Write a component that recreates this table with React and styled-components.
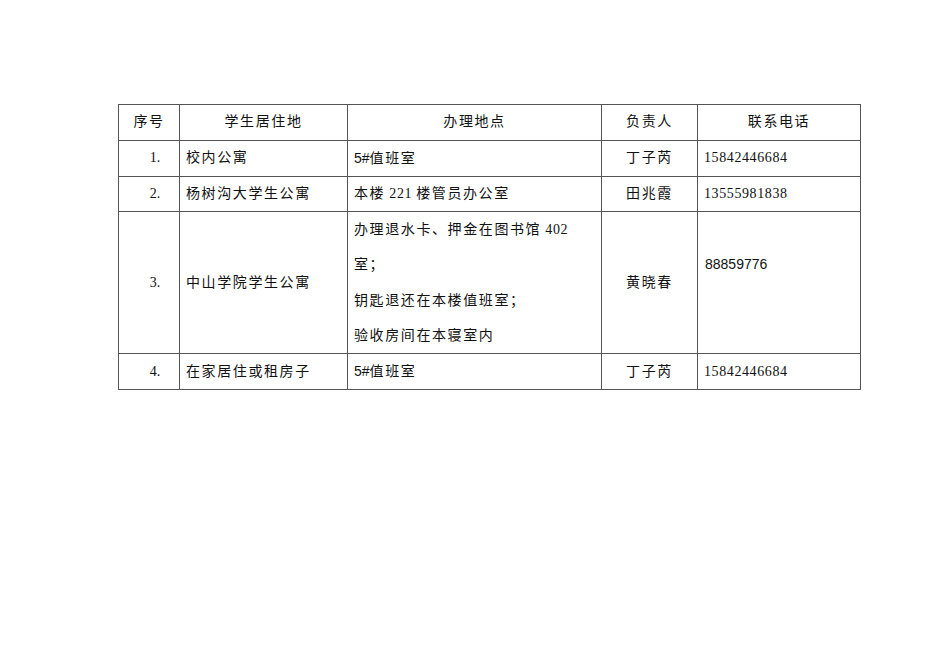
import React from 'react';
import styled, { createGlobalStyle } from 'styled-components';

const GlobalStyle = createGlobalStyle`
  html, body {
    margin: 0;
    padding: 0;
    background: #ffffff;
  }
  body {
    font-family: 'Liberation Serif', 'Noto Sans CJK SC', serif;
    color: #111;
  }
`;

const Page = styled.div`
  width: 950px;
  height: 672px;
  padding: 104px 0 0 118px;
  box-sizing: border-box;
`;

const Table = styled.table`
  border-collapse: collapse;
  table-layout: fixed;
  width: 742px;
  border: 1px solid #444;
`;

const Row = styled.tr`
  height: ${(p) => p.h}px;
`;

const Cell = styled.td`
  border: 1px solid #555;
  padding: ${(p) => (p.$top ? '35px 7px 0' : '0 6px')};
  vertical-align: ${(p) => (p.$top ? 'top' : 'middle')};
  text-align: ${(p) => p.$align || 'left'};
  font-family: 'Liberation Serif', 'Noto Sans CJK SC', serif;
  font-size: 14px;
  letter-spacing: 1.6px;
  line-height: 34px;
  white-space: nowrap;
  color: #111;
`;

const Num = styled.span`
  font-family: 'Liberation Serif', serif;
  font-size: 14px;
  letter-spacing: 0.6px;
`;

const Sans = styled.span`
  font-family: 'Liberation Sans', sans-serif;
  font-size: 14px;
  letter-spacing: 0;
`;

const Index = styled.span`
  display: inline-block;
  padding-left: 12px;
  font-family: 'Liberation Serif', serif;
  font-size: 14px;
  letter-spacing: 0;
`;

const Line = styled.div`
  line-height: 35.25px;
`;

const rows = [
  { n: '1.', place: '校内公寓', office: <><Sans>5#</Sans>值班室</>, person: '丁子芮', phone: <Num>15842446684</Num> },
  { n: '2.', place: '杨树沟大学生公寓', office: <>本楼<Num> 221 </Num>楼管员办公室</>, person: '田兆霞', phone: <Num>13555981838</Num> },
];

export default function App() {
  return (
    <>
      <GlobalStyle />
      <Page>
        <Table>
          <colgroup>
            <col style={{ width: 61 }} />
            <col style={{ width: 168 }} />
            <col style={{ width: 254 }} />
            <col style={{ width: 96 }} />
            <col style={{ width: 163 }} />
          </colgroup>
          <tbody>
            <Row h={35.5}>
              <Cell $align="center">序号</Cell>
              <Cell $align="center">学生居住地</Cell>
              <Cell $align="center">办理地点</Cell>
              <Cell $align="center">负责人</Cell>
              <Cell $align="center">联系电话</Cell>
            </Row>
            {rows.map((r) => (
              <Row h={35.5} key={r.n}>
                <Cell $align="center"><Index>{r.n}</Index></Cell>
                <Cell>{r.place}</Cell>
                <Cell>{r.office}</Cell>
                <Cell $align="center">{r.person}</Cell>
                <Cell>{r.phone}</Cell>
              </Row>
            ))}
            <Row h={141}>
              <Cell $align="center"><Index>3.</Index></Cell>
              <Cell>中山学院学生公寓</Cell>
              <Cell>
                <Line>办理退水卡、押金在图书馆<Num> 402</Num></Line>
                <Line>室；</Line>
                <Line>钥匙退还在本楼值班室；</Line>
                <Line>验收房间在本寝室内</Line>
              </Cell>
              <Cell $align="center">黄晓春</Cell>
              <Cell $top><Sans>88859776</Sans></Cell>
            </Row>
            <Row h={35}>
              <Cell $align="center"><Index>4.</Index></Cell>
              <Cell>在家居住或租房子</Cell>
              <Cell><Sans>5#</Sans>值班室</Cell>
              <Cell $align="center">丁子芮</Cell>
              <Cell><Num>15842446684</Num></Cell>
            </Row>
          </tbody>
        </Table>
      </Page>
    </>
  );
}
